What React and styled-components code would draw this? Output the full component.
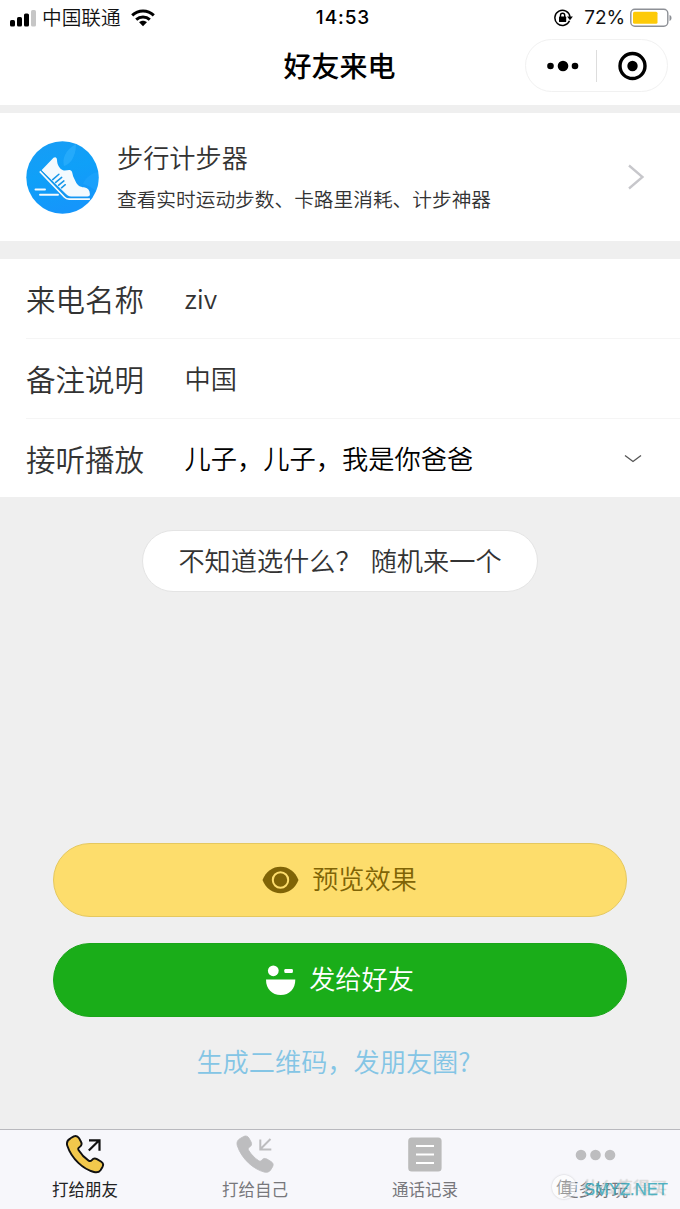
import React from 'react';
import styled, { createGlobalStyle } from 'styled-components';

const Global = createGlobalStyle`
  * { box-sizing: border-box; }
  body { margin: 0; background: #efefef; }
`;

const Screen = styled.div`
  width: 680px;
  height: 1209px;
  overflow: hidden;
  display: flex;
  flex-direction: column;
  background: #efefef;
  color: #333;
  font-family: 'Noto Sans CJK SC', sans-serif;
  font-weight: 350;
  white-space: nowrap;
`;

const StatusBar = styled.header`
  height: 34px;
  padding: 0 8px 0 10px;
  display: grid;
  grid-template-columns: 1fr auto 1fr;
  align-items: center;
  background: #fff;
  color: #111;
  font-family: Inter, 'Noto Sans CJK SC', sans-serif;
  font-size: 19px;
  line-height: 34px;
`;

const StatusGroup = styled.div`
  display: flex;
  align-items: center;
  justify-content: ${(p) => (p.$end ? 'flex-end' : 'flex-start')};
`;

const Carrier = styled.span`
  margin: 1px 10px 0 6px;
  font-size: 19.7px;
`;

const Clock = styled.span`
  padding-left: 4px;
  font-size: 19px;
  font-weight: 500;
  letter-spacing: 0.9px;
  color: #000;
`;

const Percent = styled.span`
  margin: 1px 5px 0 10px;
  font-weight: 400;
  letter-spacing: -0.1px;
`;

const NavBar = styled.div`
  height: 71px;
  padding: 0 12px 8px 0;
  display: grid;
  grid-template-columns: 1fr auto 1fr;
  align-items: center;
  background: #fff;
`;

const Title = styled.h1`
  grid-column: 2;
  margin: -1px 0 0 11px;
  font-size: 28px;
  line-height: 40px;
  font-weight: 500;
  color: #000;
`;

const Capsule = styled.div`
  justify-self: end;
  width: 143px;
  height: 53px;
  display: flex;
  align-items: center;
  border: 1px solid #f1f1f1;
  border-radius: 27px;
  svg { flex: 1; height: 32px; width: 70px; }
`;

const CapsuleDivider = styled.span`
  width: 1px;
  height: 32px;
  background: #ddd;
`;

const AppCard = styled.section`
  height: 128px;
  margin-top: 8px;
  padding: 0 35px 0 26px;
  display: flex;
  align-items: center;
  background: #fff;
`;

const CardText = styled.div`
  flex: 1;
  margin-left: 18px;
  padding-top: 5px;
`;

const CardTitle = styled.div`
  font-size: 26.2px;
  line-height: 38px;
  height: 41px;
`;

const CardNote = styled.div`
  font-size: 19.7px;
  line-height: 40px;
  height: 42px;
`;

const Form = styled.section`
  height: 238px;
  margin-top: 18px;
  padding-left: 26px;
  background: #fff;
`;

const Row = styled.div`
  height: ${(p) => (p.$last ? 78 : 80)}px;
  padding-right: 38px;
  display: flex;
  align-items: center;
  border-bottom: ${(p) => (p.$last ? 0 : 1)}px solid #f5f5f5;
  svg { margin-top: 2px; }
`;

const Label = styled.span`
  width: 158px;
  margin-top: -1px;
  font-size: 29.5px;
`;

const Value = styled.span`
  flex: 1;
  padding-left: 0.5px;
  margin-top: -1px;
  font-size: 26.25px;
  color: ${(p) => (p.$dark ? '#000' : '#333')};
`;

const RandomButton = styled.button`
  align-self: center;
  flex: none;
  width: 396px;
  height: 62px;
  margin-top: 33px;
  padding: 0 0 3px;
  border: 1px solid #e4e4e4;
  border-radius: 31px;
  background: #fff;
  color: #333;
  font: inherit;
  font-size: 26.2px;
  display: flex;
  align-items: center;
  justify-content: center;
  gap: 9px;
`;

const Actions = styled.div`
  margin: 251px 53px 0;
  display: flex;
  flex-direction: column;
  align-items: center;
  gap: 26px;
`;

const tones = {
  yellow: { bg: '#fddd6c', line: '#e5c85f', ink: '#806406' },
  green: { bg: '#1aad19', line: '#1aa519', ink: '#fff' },
};

const ActionButton = styled.button`
  width: 574px;
  height: 74px;
  padding: 0 1px 0 0;
  border: 1px solid ${(p) => tones[p.$tone].line};
  border-radius: 37px;
  background: ${(p) => tones[p.$tone].bg};
  color: ${(p) => tones[p.$tone].ink};
  font: inherit;
  font-size: 26.2px;
  display: flex;
  align-items: center;
  justify-content: center;
  gap: 13px;
  span { margin-top: -4px; }
`;

const QrLink = styled.a`
  margin-top: -2px;
  padding-right: 13px;
  font-size: 26.2px;
  line-height: 40px;
  color: #84c5e5;
`;

const TabBar = styled.nav`
  height: 80px;
  margin-top: auto;
  display: grid;
  grid-template-columns: repeat(4, 1fr);
  position: relative;
  background: #f7f7fb;
  border-top: 1px solid #b9b9be;
`;

const Tab = styled.div`
  display: flex;
  flex-direction: column;
  align-items: center;
  padding-top: 4px;
  font-size: 16.5px;
  line-height: 24px;
  color: ${(p) => (p.$active ? '#222' : '#77777b')};
  font-weight: 400;
  svg { display: block; margin-bottom: 2px; }
`;

const Watermark = styled.div`
  position: absolute;
  left: 552px;
  top: 44px;
  display: flex;
  align-items: center;
  font-size: 17px;
  line-height: 25px;
  color: rgba(255, 255, 255, 0.5);
  text-shadow: 0 0 1px #aaa;
`;

const Seal = styled.span`
  width: 24px;
  height: 24px;
  margin-right: 6px;
  border-radius: 50%;
  background: rgba(255, 255, 255, 0.6);
  box-shadow: 0 0 2px rgba(120, 120, 120, 0.4);
  text-align: center;
  font-size: 16px;
  line-height: 22px;
  color: #999;
  text-shadow: none;
`;

const SiteMark = styled.span`
  position: absolute;
  left: 584px;
  top: 49px;
  font: 16.6px/22px 'Liberation Sans', sans-serif;
  color: rgba(57, 170, 187, 0.85);
  -webkit-text-stroke: 0.25px rgba(57, 170, 187, 0.85);
`;

const Signal = () => (
  <svg width="26" height="18" viewBox="0 0 26 18">
    <rect x="0" y="11" width="5" height="6.5" rx="1.6" fill="#000" />
    <rect x="7" y="8" width="5" height="9.5" rx="1.6" fill="#000" />
    <rect x="14" y="4.5" width="5" height="13" rx="1.6" fill="#000" />
    <rect x="21" y="1" width="5" height="16.5" rx="1.6" fill="#c6c6c6" />
  </svg>
);

const Wifi = () => (
  <svg width="24" height="18" viewBox="0 0 24 18" fill="none" stroke="#000" strokeWidth="3">
    <path d="M1.2 6.3C7.3.6 16.7.6 22.8 6.3" />
    <path d="M5.2 10.6c3.9-3.5 9.7-3.5 13.6 0" />
    <path d="M12 17.2 8.1 13.3c2.2-2 5.600-2 7.800 0z" fill="#000" stroke="none" />
  </svg>
);

const RotationLock = () => (
  <svg width="20" height="18" viewBox="0 0 20 18">
    <path d="M15.500 11.800A7.600 7.600 0 1 1 16 7.800" fill="none" stroke="#000" strokeWidth="1.500" />
    <path d="M13.100 7.400h5.800L16 11.200z" fill="#000" />
    <rect x="5" y="7.600" width="7.200" height="5.500" rx=".7" fill="#000" />
    <path d="M6.500 8V6.400a2.100 2.100 0 0 1 4.200 0V8" fill="none" stroke="#000" strokeWidth="1.400" />
  </svg>
);

const Battery = () => (
  <svg width="42" height="20" viewBox="0 0 42 20">
    <rect x=".8" y="1.300" width="37" height="17" rx="4" fill="none" stroke="#8d9096" strokeWidth="1.400" />
    <rect x="3" y="3.800" width="24.500" height="12" rx="1.500" fill="#fdca08" />
    <path d="M39.500 7v6c1.300-.4 2-1.600 2-3s-.7-2.600-2-3z" fill="#8d9096" />
  </svg>
);

const ShoeLogo = () => (
  <svg width="73" height="73" viewBox="0 0 73 73">
    <defs>
      <linearGradient id="sky" x1="0" y1="0" x2="0.3" y2="1">
        <stop offset="0" stopColor="#189cf5" />
        <stop offset=".5" stopColor="#0fa0f8" />
        <stop offset="1" stopColor="#1596fb" />
      </linearGradient>
    </defs>
    <circle cx="36.500" cy="36.500" r="36.200" fill="url(#sky)" />
    <path d="M50 3C39 9 36 18 38 25c5-1 12-8 12-22z" fill="#3bb9ff" opacity=".45" />
    <path d="M72 31C66 32 60 36 57 43c7 2 12 6 13 7 3-6 3-12 2-19z" fill="#28abff" opacity=".4" />
    <path
      d="M27.500 16.800c1.800-1.200 3.400-.4 3.500 2.200.2 5 2.400 8.600 6 10.200 2.500 1.100 5.400-.8 7.400 0 2.300 1 1.800 4 3.200 7l2.600 5.500c2.200 4 5.500 4.300 8.700 4.800 2.900.5 4.900 2.700 5 6.700 0 1.500-1 2.200-2.500 2.200H45c-2.200 0-3.500-.8-5-2.300L15.500 29.200z"
      fill="#f3fafe"
    />
    <path d="M14.300 29.800 38.500 55.500c1.400 1.500 2.700 2.200 4.800 2.200h20.500" fill="none" stroke="#1596e8" strokeWidth="2.600" />
    <path d="M13.800 30.300 38.300 56c1.400 1.500 2.700 2.200 4.800 2.200h20.800" fill="none" stroke="#f3fafe" strokeWidth="1.700" />
    <g stroke="#1596e8" strokeWidth="1.500" strokeLinecap="round">
      <path d="m26.700 38.600 6.200-5.400M29.700 41.400l6-5M32.700 44.200l5.200-4.300M35.500 46.800l3.800-3.100" />
    </g>
    <path d="M9.500 48.500H19M14 53.800h18" stroke="#f3fafe" strokeWidth="1.900" strokeLinecap="round" />
  </svg>
);

const ChevronRight = () => (
  <svg width="18" height="26" viewBox="0 0 18 26">
    <path d="M2 1.500 15.500 13 2 24.500" fill="none" stroke="#c7c7cb" strokeWidth="2.300" />
  </svg>
);

const ChevronDown = () => (
  <svg width="18" height="10" viewBox="0 0 18 10">
    <path d="m1 1.500 8 6 8-6" fill="none" stroke="#555" strokeWidth="1.300" />
  </svg>
);

const Eye = () => (
  <svg width="37" height="28" viewBox="0 0 37 28">
    <path d="M.5 14C4 5.500 10.500.8 18.500.8S33 5.500 36.500 14C33 22.500 26.500 27.200 18.500 27.200S4 22.500.5 14z" fill="#806406" />
    <circle cx="18.500" cy="14" r="7.700" fill="#806406" stroke="#fddd6c" strokeWidth="2" />
  </svg>
);

const Wink = () => (
  <svg width="31" height="32" viewBox="0 0 31 32" fill="#fff">
    <circle cx="8.300" cy="6.800" r="5.400" />
    <rect x="19.300" y="5" width="8.600" height="4" rx="1.200" />
    <path d="M1 15.500h29.300C30.300 25 24.500 31 15.700 31S1 25 1 15.500z" />
  </svg>
);

const handset =
  'M4.500 2.800 7.800.9c2.300-1 4-.1 5.300 1.900l2 3.700c1.100 2.300.3 4-1.700 5.200-1.200.7-1.500 1.800-.7 3.100 2.600 4.300 5.700 7.500 9.900 10.300 1.300.9 2.300.6 3.200-.5 1.400-1.800 3.100-2.200 5.200-1l4.300 2.600c2.100 1.400 2.300 3.200 1.200 5.200l-2 3.300c-1.400 2-3.800 2.500-6.500 1.800C17.500 33.800 5.700 23.500 1.300 10.200.3 7 1.500 4.400 4.500 2.800z';

const Phone = ({ incoming }) => (
  <svg width="40" height="41" viewBox="-1 -1.500 40 41" fill="none">
    <path
      d={handset}
      fill={incoming ? '#bdbdbf' : '#f2c84c'}
      stroke={incoming ? '#bdbdbf' : '#111'}
      strokeWidth={incoming ? 0.8 : 1.9}
    />
    {incoming ? (
      <path d="M34.500 3.500 24.500 13.500M24.300 4v10h11" stroke="#bdbdbf" strokeWidth="2" />
    ) : (
      <path d="M22.800 15 33 5M23 4.800h10.500v10.500" stroke="#111" strokeWidth="2.200" />
    )}
  </svg>
);

const Records = () => (
  <svg width="34" height="41" viewBox="0 0 34 41">
    <rect x=".2" y="3.500" width="33.400" height="34" rx="3.500" fill="#bbb" />
    <path d="M8 12h18M8 20.500h18M8 29h18" stroke="#fff" strokeWidth="2.200" />
  </svg>
);

const More = () => (
  <svg width="41" height="41" viewBox="0 0 41 41" fill="#bdbdbf">
    <circle cx="6" cy="21" r="5.300" />
    <circle cx="20.500" cy="21" r="5.300" />
    <circle cx="35" cy="21" r="5.300" />
  </svg>
);

const fields = [
  { label: '来电名称', value: 'ziv' },
  { label: '备注说明', value: '中国' },
  { label: '接听播放', value: '儿子，儿子，我是你爸爸', select: true },
];

const tabs = [
  { label: '打给朋友', icon: <Phone />, active: true },
  { label: '打给自己', icon: <Phone incoming /> },
  { label: '通话记录', icon: <Records /> },
  { label: '更多好玩', icon: <More /> },
];

export default function App() {
  return (
    <Screen>
      <Global />
      <StatusBar>
        <StatusGroup>
          <Signal />
          <Carrier>中国联通</Carrier>
          <Wifi />
        </StatusGroup>
        <Clock>14:53</Clock>
        <StatusGroup $end>
          <RotationLock />
          <Percent>72%</Percent>
          <Battery />
        </StatusGroup>
      </StatusBar>
      <NavBar>
        <Title>好友来电</Title>
        <Capsule>
          <svg viewBox="0 0 70 32">
            <circle cx="24.500" cy="16" r="3.300" />
            <circle cx="37" cy="16" r="5.300" />
            <circle cx="49" cy="16" r="3.300" />
          </svg>
          <CapsuleDivider />
          <svg viewBox="0 0 70 32">
            <circle cx="35.500" cy="16" r="12.500" fill="none" stroke="#000" strokeWidth="3.400" />
            <circle cx="35.500" cy="16" r="5.200" />
          </svg>
        </Capsule>
      </NavBar>
      <AppCard>
        <ShoeLogo />
        <CardText>
          <CardTitle>步行计步器</CardTitle>
          <CardNote>查看实时运动步数、卡路里消耗、计步神器</CardNote>
        </CardText>
        <ChevronRight />
      </AppCard>
      <Form>
        {fields.map((f) => (
          <Row key={f.label} $last={f.select}>
            <Label>{f.label}</Label>
            <Value $dark={f.select}>{f.value}</Value>
            {f.select && <ChevronDown />}
          </Row>
        ))}
      </Form>
      <RandomButton>
        <span>不知道选什么？</span>
        <span>随机来一个</span>
      </RandomButton>
      <Actions>
        <ActionButton $tone="yellow">
          <Eye />
          <span>预览效果</span>
        </ActionButton>
        <ActionButton $tone="green">
          <Wink />
          <span>发给好友</span>
        </ActionButton>
        <QrLink>生成二维码，发朋友圈?</QrLink>
      </Actions>
      <TabBar>
        {tabs.map((t) => (
          <Tab key={t.label} $active={t.active}>
            {t.icon}
            {t.label}
          </Tab>
        ))}
        <Watermark>
          <Seal>值</Seal>
          什么值得买
        </Watermark>
        <SiteMark>SMYZ.NET</SiteMark>
      </TabBar>
    </Screen>
  );
}
